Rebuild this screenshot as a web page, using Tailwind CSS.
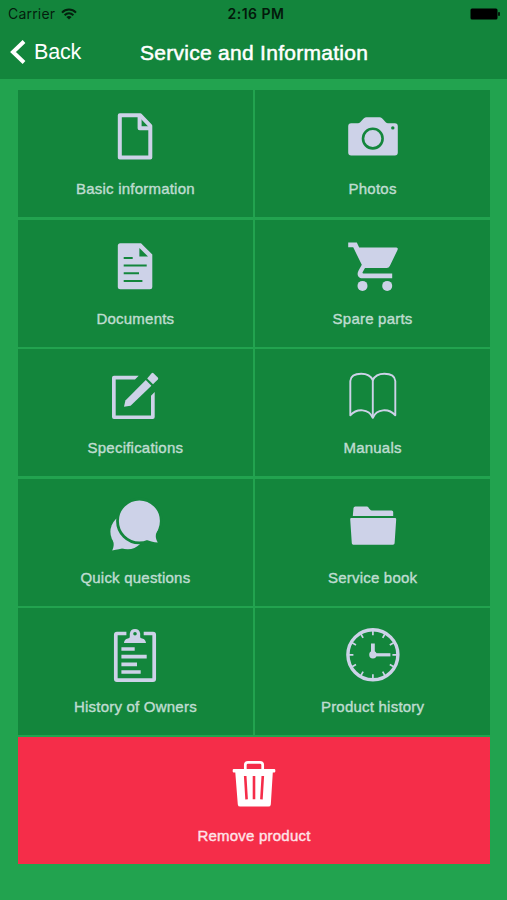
<!DOCTYPE html>
<html lang="en">
<head>
  <meta charset="UTF-8" />
  <meta name="viewport" content="width=device-width, initial-scale=1.0"/>
  <title>Service and Information</title>
  <script src="https://cdn.jsdelivr.net/npm/@tailwindcss/browser@4"></script>
</head>
<body class="bg-[#22a34f] font-['Liberation_Sans',Arial,sans-serif] h-[900px] overflow-hidden">

  <!-- Header -->
  <header class="h-[79px] bg-[#13853c]">
    <!-- Status bar -->
    <div class="grid grid-cols-3 items-center h-[27px] pl-2 pr-[7px] text-black font-['Inter',sans-serif]">
      <div class="flex items-center gap-[6px] text-[14px] leading-none text-black/80">
        <span class="tracking-[0.2px]">Carrier</span>
        <svg class="w-4 h-3" viewBox="0 0 16 12" fill="none" stroke="#04200e" stroke-width="2">
          <path d="M1 4.6C5 .6 11 .6 15 4.6"/>
          <path d="M3.6 7.2C6.2 4.7 9.8 4.7 12.4 7.2"/>
          <path d="M8 11.6L5.4 9C7 7.6 9 7.6 10.6 9z" fill="#04200e" stroke="none"/>
        </svg>
      </div>
      <div class="pl-1 text-center text-[14px] leading-none font-semibold whitespace-nowrap text-[#03190b] tracking-[0.5px]">2:16 PM</div>
      <svg class="w-[30px] h-3 justify-self-end" viewBox="0 0 30 12">
        <rect x="0.5" y="0.5" width="27" height="11" rx="1.5"/>
        <rect x="28.2" y="4" width="1.6" height="4" rx="0.8"/>
      </svg>
    </div>
    <!-- Nav bar -->
    <div class="grid grid-cols-[140px_1fr_139px] items-center h-[50px] text-white">
      <div class="flex items-center gap-2 pl-[10px]">
        <svg class="w-4 h-6" viewBox="0 0 16 24" fill="none" stroke="white" stroke-width="4">
          <path d="M14 1.5L3 12L14 22.5"/>
        </svg>
        <span class="pt-0.5 text-[21.5px] leading-none tracking-[-0.2px]">Back</span>
      </div>
      <h1 class="text-[21px] leading-none text-center whitespace-nowrap tracking-[0.28px] [-webkit-text-stroke:0.5px_white]">Service and Information</h1>
    </div>
  </header>

  <!-- Menu tiles -->
  <main class="mx-[18px] mr-[17px] mt-[11.4px] grid grid-cols-2 gap-[2.4px] auto-rows-[127px] text-[15px] tracking-[0.22px] text-[#bfdcd0] fill-[#cdd2e8] stroke-none">

    <a class="flex flex-col items-center pt-[17px] bg-[#13863c]">
      <svg class="w-[60px] h-[60px]" viewBox="0 0 60 60" fill="none" stroke="#cdd2e8" stroke-width="4" stroke-linejoin="round">
        <path d="M14.8 8.3H35.3L45.3 18.8V50.6H14.8z"/>
        <path d="M34.6 8.5V21.3H45.3"/>
      </svg>
      <span class="mt-[12px] leading-[20px] whitespace-nowrap [-webkit-text-stroke:0.4px_#bfdcd0]">Basic information</span>
    </a>

    <a class="flex flex-col items-center pt-[17px] bg-[#13863c]">
      <svg class="w-[60px] h-[60px]" viewBox="0 0 60 60">
        <path d="M8.2 16.3H15C18.5 16.3 19.5 10.3 23.5 10.3H36.5C40.5 10.3 41.5 16.3 45 16.3H51.8Q54.8 16.3 54.8 19.3V45.6Q54.8 48.6 51.8 48.6H8.2Q5.2 48.6 5.2 45.6V19.3Q5.2 16.3 8.2 16.3z"/>
        <circle cx="29.8" cy="31.6" r="9.8" fill="none" stroke="#13863c" stroke-width="2.6"/>
        <circle cx="49.8" cy="20.9" r="1.7" fill="#13863c"/>
      </svg>
      <span class="mt-[12px] leading-[20px] whitespace-nowrap [-webkit-text-stroke:0.4px_#bfdcd0]">Photos</span>
    </a>

    <a class="flex flex-col items-center pt-[17px] bg-[#13863c]">
      <svg class="w-[60px] h-[60px]" viewBox="0 0 60 60">
        <path d="M15.3 6.2H36L47.3 17.4V49.7Q47.3 52.2 44.8 52.2H15.3Q12.8 52.2 12.8 49.7V8.7Q12.8 6.2 15.3 6.2z"/>
        <path d="M34.4 10.9V19.5H43z" fill="#13863c"/>
        <path d="M18.7 20.9H27.7M18.7 28.5H41.7M18.7 36.2H34M18.7 43.9H37.4" stroke="#13863c" stroke-width="2"/>
      </svg>
      <span class="mt-[12px] leading-[20px] whitespace-nowrap [-webkit-text-stroke:0.4px_#bfdcd0]">Documents</span>
    </a>

    <a class="flex flex-col items-center pt-[17px] bg-[#13863c]">
      <svg class="w-[60px] h-[60px]" viewBox="0 0 60 60">
        <path d="M5.2 5.5H13.8L16.2 10.5H53.4Q55.5 10.8 54.5 13L46.8 29Q45.8 30.9 43.8 30.9H22L19.6 35.2Q19.2 36.5 20.5 36.5H49.2V41.3H19.5C14.5 41.3 13.6 36.6 15.6 33.4L18.8 27.8L10.2 10.3H5.2z"/>
        <circle cx="19.5" cy="48.9" r="5"/>
        <circle cx="44.2" cy="48.9" r="5"/>
      </svg>
      <span class="mt-[12px] leading-[20px] whitespace-nowrap [-webkit-text-stroke:0.4px_#bfdcd0]">Spare parts</span>
    </a>

    <a class="flex flex-col items-center pt-[17px] bg-[#13863c]">
      <svg class="w-[60px] h-[60px]" viewBox="0 0 60 60">
        <path d="M33.7 9.8L30 13.5H10.7V49.4H46V29.8L49.7 26.1V51.1Q49.7 53.1 47.7 53.1H9Q7 53.1 7 51.1V11.8Q7 9.8 9 9.8z"/>
        <path d="M19 40.8L20.4 34.5L40.8 14.1L46.4 19.8L25.6 39.8z"/>
        <path d="M42.2 12.5L46.6 7.3Q47.5 6.4 48.5 7.3L52.8 11.4Q53.7 12.4 52.8 13.4L48 18.3z"/>
      </svg>
      <span class="mt-[12px] leading-[20px] whitespace-nowrap [-webkit-text-stroke:0.4px_#bfdcd0]">Specifications</span>
    </a>

    <a class="flex flex-col items-center pt-[17px] bg-[#13863c]">
      <svg class="w-[60px] h-[60px]" viewBox="0 0 60 60" fill="none" stroke="#cdd2e8" stroke-width="1.9" stroke-linejoin="round">
        <path class="fill-none" d="M7.3 49.3V15C7.8 9.8 12.6 7.8 18.2 7.8C23.7 7.8 27.9 10 29.8 14.2C31.7 10 35.9 7.8 41.4 7.8C46.9 7.8 51.8 9.8 52.3 15V49.3C45.7 42 33.7 42.5 29.8 51.8C25.9 42.5 13.9 42 7.3 49.3z"/>
        <path d="M29.8 14V51.5"/>
      </svg>
      <span class="mt-[12px] leading-[20px] whitespace-nowrap [-webkit-text-stroke:0.4px_#bfdcd0]">Manuals</span>
    </a>

    <a class="flex flex-col items-center pt-[17px] bg-[#13863c]">
      <svg class="w-[60px] h-[60px]" viewBox="0 0 60 60">
        <circle cx="22.8" cy="35.8" r="17.4"/>
        <path d="M7.6 43C9.4 48 8.8 51 7.2 54.4C12 53.8 16 53 20 51.6z"/>
        <circle cx="34.4" cy="24.9" r="21.9" stroke="#13863c" stroke-width="2.8"/>
        <path d="M53.2 33C49.6 39 50.6 42.5 52.8 46.6C48.5 46.2 44.5 44.6 40 43.4z"/>
      </svg>
      <span class="mt-[12px] leading-[20px] whitespace-nowrap [-webkit-text-stroke:0.4px_#bfdcd0]">Quick questions</span>
    </a>

    <a class="flex flex-col items-center pt-[17px] bg-[#13863c]">
      <svg class="w-[60px] h-[60px]" viewBox="0 0 60 60">
        <path d="M9.8 20L10.5 12Q10.7 10.4 12.3 10.4H23.5C26.4 10.4 25.8 14.4 29 14.4H48.6Q50.2 14.4 50.2 16V20z"/>
        <path d="M8.4 22H52Q53.3 22 53.2 23.3L51.6 47.3Q51.5 48.7 50 48.7H10.3Q8.9 48.7 8.8 47.3L7.2 23.3Q7.1 22 8.4 22z"/>
      </svg>
      <span class="mt-[12px] leading-[20px] whitespace-nowrap [-webkit-text-stroke:0.4px_#bfdcd0]">Service book</span>
    </a>

    <a class="flex flex-col items-center pt-[17px] bg-[#13863c]">
      <svg class="w-[60px] h-[60px]" viewBox="0 0 60 60">
        <path class="fill-none" d="M21.4 8.5H12Q10.8 8.5 10.8 9.7V54Q10.8 55.2 12 55.2H48Q49.2 55.2 49.2 54V9.7Q49.2 8.5 48 8.5H38.7" stroke="#cdd2e8" stroke-width="3.7"/>
        <path fill-rule="evenodd" d="M19 18C19.2 14.6 21.5 13.6 23.6 13.2C25.4 12.8 24.6 10.4 24.8 8.4A5.3 5.3 0 0 1 35.2 8.4C35.4 10.4 34.6 12.8 36.4 13.2C38.5 13.6 40.8 14.6 41 18zM30 6.9A1.8 1.8 0 1 0 30 10.5A1.8 1.8 0 1 0 30 6.9z"/>
        <path d="M16.4 24H29.7M16.4 31.7H41.7M16.4 39.3H32M16.4 47H35.7" stroke="#cdd2e8" stroke-width="3.7"/>
      </svg>
      <span class="mt-[12px] leading-[20px] whitespace-nowrap [-webkit-text-stroke:0.4px_#bfdcd0]">History of Owners</span>
    </a>

    <a class="flex flex-col items-center pt-[17px] bg-[#13863c]">
      <svg class="w-[60px] h-[60px]" viewBox="0 0 60 60">
        <g transform="translate(29.9 29.8)" stroke="#cdd2e8">
          <circle class="fill-none" r="25" stroke-width="3.4"/>
          <path stroke-width="1.7" d="M0 -24V-19.5M0 24V19.5M-24 0H-19.5M24 0H19.5M12 -20.8L9.8 -16.9M20.8 -12L16.9 -9.8M20.8 12L16.9 9.8M12 20.8L9.8 16.9M-12 20.8L-9.8 16.9M-20.8 12L-16.9 9.8M-20.8 -12L-16.9 -9.8M-12 -20.8L-9.8 -16.9"/>
          <path stroke-width="3.8" d="M0 0V-11.3"/>
          <path stroke-width="3.2" d="M0 0H17.5"/>
          <circle r="3.7" stroke="none"/>
        </g>
      </svg>
      <span class="mt-[12px] leading-[20px] whitespace-nowrap [-webkit-text-stroke:0.4px_#bfdcd0]">Product history</span>
    </a>

    <!-- Remove product -->
    <a class="col-span-2 flex flex-col items-center pt-[17px] bg-[#f52d49] text-[#ffe3e8] fill-white">
      <svg class="w-[60px] h-[60px]" viewBox="0 0 60 60">
        <path class="fill-none" d="M21.3 16V11Q21.3 8.3 24 8.3H36Q38.7 8.3 38.7 11V16" stroke="white" stroke-width="2.7"/>
        <path d="M9.8 15H50.2Q51.3 15 51.3 16.1V17.5Q51.3 18.6 50.2 18.6H48.8L46.8 50.4Q46.6 52.6 44.4 52.6H16.2Q14 52.6 13.8 50.4L11.3 18.6H9.8Q8.7 18.6 8.7 17.5V16.1Q8.7 15 9.8 15z"/>
        <path d="M21.2 22L22.6 45.3M30 22V45.3M38.8 22L37.4 45.3" stroke="#f52d49" stroke-width="2.6"/>
      </svg>
      <span class="mt-[12px] leading-[20px] whitespace-nowrap [-webkit-text-stroke:0.4px_#ffe3e8]">Remove product</span>
    </a>

  </main>

</body>
</html>
